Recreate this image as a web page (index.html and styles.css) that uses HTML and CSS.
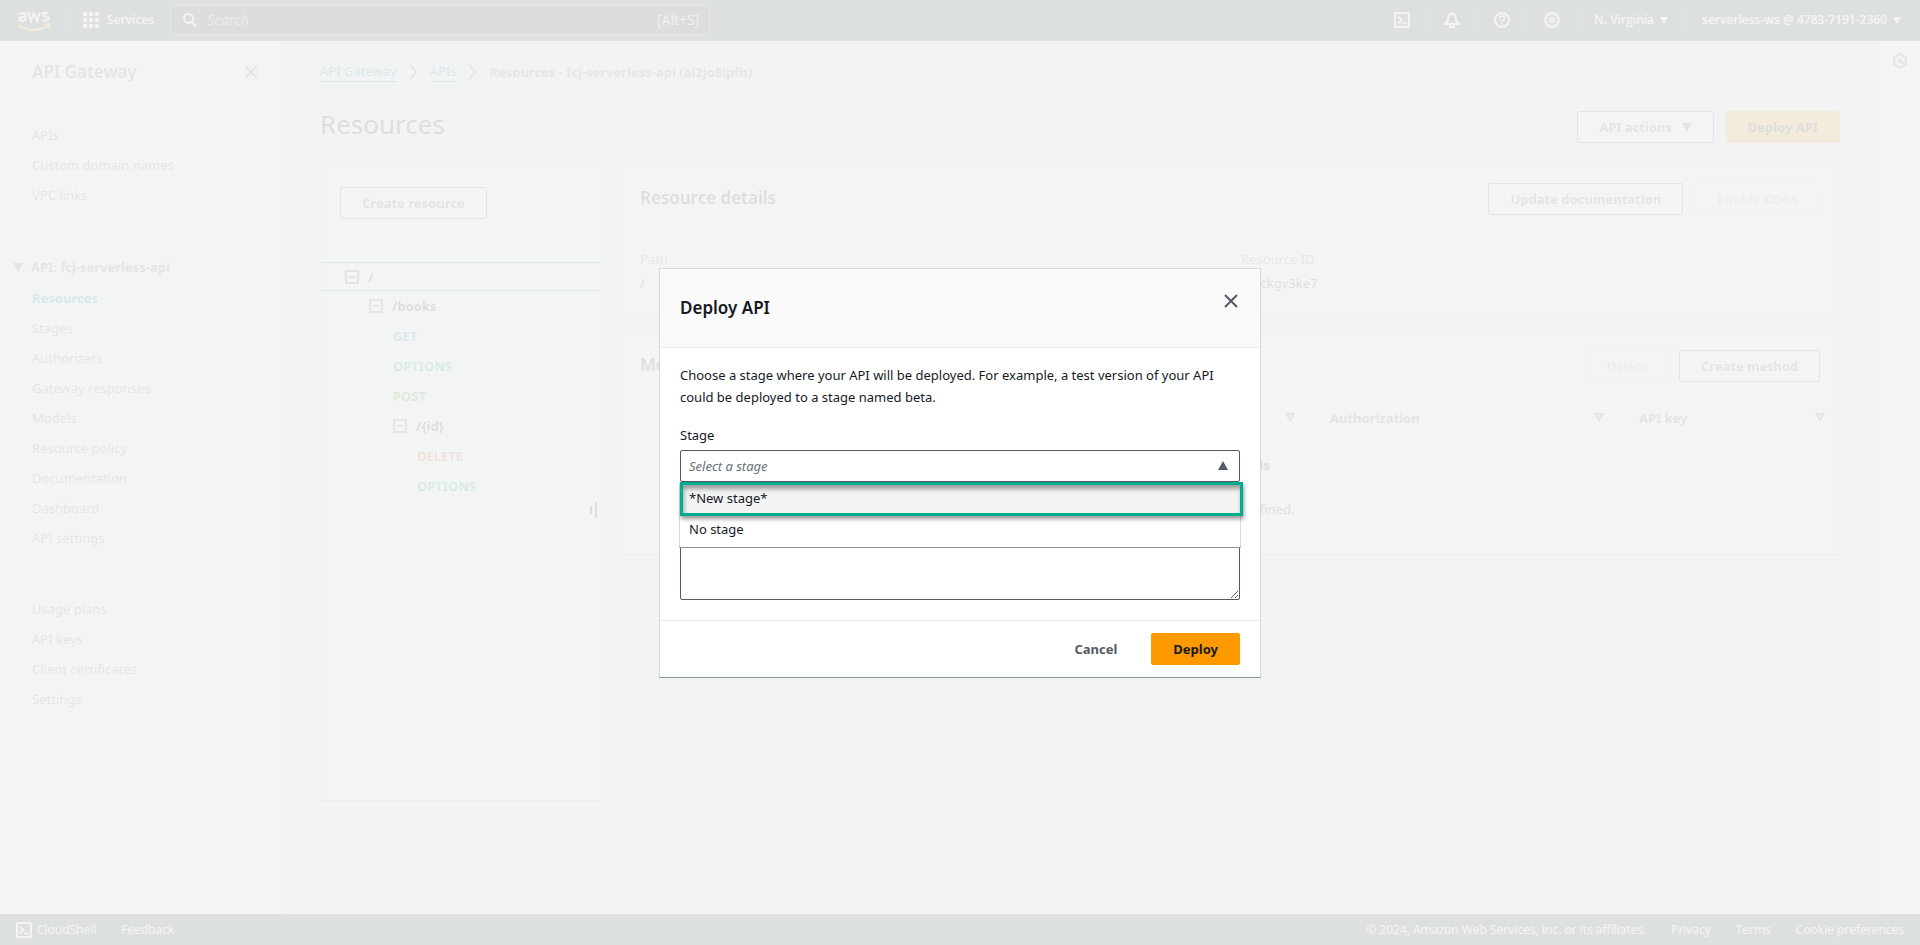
FILE: index.html
```html
<!DOCTYPE html>
<html lang="en">
<head>
<meta charset="utf-8">
<title>API Gateway - Resources</title>
<link rel="stylesheet" href="styles.css">
</head>
<body>
<div class="app">
  <header class="topbar">
    <a class="logo" href="#" aria-label="AWS">
      <svg width="34" height="24" viewBox="0 0 34 24" fill="none" stroke="#fff" stroke-width="2">
        <path d="M2.500 6.500Q7.500 3.500 8.500 7V13M8.500 9Q2.500 8.500 2.500 11Q3 14.500 8.500 11.500M11 4L14 13L17 5L20 13L23 4M31 5.500Q26 3.500 26 6.500C26 9.500 31.500 7.500 31.500 10.500Q31 14 25.500 12"/>
        <path d="M1 17Q16 26 30 18.500M27 16.500H32.500L31.500 21" stroke="#ff9900"/>
      </svg>
    </a>
    <button class="services" type="button">
      <svg width="16" height="16" viewBox="0 0 16 16" fill="#fff"><path d="M0 0h4v4H0zM6 0h4v4H6zM12 0h4v4h-4zM0 6h4v4H0zM6 6h4v4H6zM12 6h4v4h-4zM0 12h4v4H0zM6 12h4v4H6zM12 12h4v4h-4z"/></svg>
      Services
    </button>
    <label class="search">
      <svg width="14" height="14" viewBox="0 0 14 14" fill="none" stroke="#fff" stroke-width="2"><circle cx="5.500" cy="5.500" r="4.500"/><path d="M9 9l4.300 4.300"/></svg>
      <input type="search" placeholder="Search" aria-label="Search">
      <span>[Alt+S]</span>
    </label>
    <nav class="utilities">
      <button type="button" aria-label="CloudShell"><svg width="16" height="16" viewBox="0 0 16 16" fill="none" stroke="#fff" stroke-width="2"><rect x="1" y="1" width="14" height="14" rx="1"/><path d="M4 4.500L7.500 8L4 11.500M8.500 11.500H12.500"/></svg></button>
      <button type="button" aria-label="Notifications"><svg width="16" height="16" viewBox="0 0 16 16" fill="none" stroke="#fff" stroke-width="2" stroke-linejoin="round"><path d="M8 0v2M1 12H15L12 8.500V6Q11.500 2 8 2T4 6V8.500ZM6 13v2h4v-2"/></svg></button>
      <button type="button" aria-label="Help"><svg width="16" height="16" viewBox="0 0 16 16" fill="none" stroke="#fff" stroke-width="2"><circle cx="8" cy="8" r="7"/><path d="M5.500 6.500Q5.500 4 8 4T10.500 6.500C10.500 8 8 8 8 10M8 11v2" stroke-width="1.600"/></svg></button>
      <button type="button" aria-label="Settings"><svg width="16" height="16" viewBox="0 0 16 16" fill="none" stroke="#fff" stroke-width="2" stroke-linejoin="round"><path d="M6.500 1h3l.5 1.700 2-.7 2 2-.7 2 1.700.5v3l-1.700.5.700 2-2 2-2-.7-.5 1.700h-3L6 13.300l-2 .7-2-2 .7-2L1 9.500v-3L2.700 6 2 4l2-2 2 .7z"/><circle cx="8" cy="8" r="2"/></svg></button>
      <button type="button">N. Virginia <svg width="8" height="7" viewBox="0 0 8 7" fill="#fff"><path d="M0 0h8L4 7z"/></svg></button>
      <button type="button">serverless-ws @ 4783-7191-2360 <svg width="8" height="7" viewBox="0 0 8 7" fill="#fff"><path d="M0 0h8L4 7z"/></svg></button>
    </nav>
  </header>

  <div class="workspace">
    <aside class="sidebar">
      <div class="sidebar-head">
        <h2>API Gateway</h2>
        <button type="button" class="icon-button" aria-label="Close navigation"><svg width="14" height="14" viewBox="0 0 14 14" fill="none" stroke="#545b64" stroke-width="2"><path d="M1 1l12 12M13 1L1 13"/></svg></button>
      </div>
      <ul class="nav-list nav-first">
        <li><a href="#">APIs</a></li>
        <li><a href="#">Custom domain names</a></li>
        <li><a href="#">VPC links</a></li>
      </ul>
      <hr>
      <button type="button" class="nav-group"><svg width="10" height="9" viewBox="0 0 10 9" fill="#545b64"><path d="M0 0h10L5 9z"/></svg>API: fcj-serverless-api</button>
      <ul class="nav-list nav-api">
        <li><a class="current" href="#">Resources</a></li>
        <li><a href="#">Stages</a></li>
        <li><a href="#">Authorizers</a></li>
        <li><a href="#">Gateway responses</a></li>
        <li><a href="#">Models</a></li>
        <li><a href="#">Resource policy</a></li>
        <li><a href="#">Documentation</a></li>
        <li><a href="#">Dashboard</a></li>
        <li><a href="#">API settings</a></li>
      </ul>
      <hr>
      <ul class="nav-list nav-last">
        <li><a href="#">Usage plans</a></li>
        <li><a href="#">API keys</a></li>
        <li><a href="#">Client certificates</a></li>
        <li><a href="#">Settings</a></li>
      </ul>
    </aside>

    <main class="content">
      <nav class="crumbs" aria-label="Breadcrumb">
        <a href="#">API Gateway</a>
        <svg width="9" height="16" viewBox="0 0 9 16" fill="none" stroke="#687078" stroke-width="2"><path d="M1 1l6.500 7L1 15"/></svg>
        <a href="#">APIs</a>
        <svg width="9" height="16" viewBox="0 0 9 16" fill="none" stroke="#687078" stroke-width="2"><path d="M1 1l6.500 7L1 15"/></svg>
        <span>Resources - fcj-serverless-api (ai2jo8ipfh)</span>
      </nav>
      <div class="page-head">
        <h1>Resources</h1>
        <div class="actions">
          <button type="button" class="btn">API actions <svg width="10" height="9" viewBox="0 0 10 9" fill="#545b64"><path d="M0 0h10L5 9z"/></svg></button>
          <button type="button" class="btn primary">Deploy API</button>
        </div>
      </div>
      <div class="columns">
        <section class="panel tree-panel">
          <div class="tree-head"><button type="button" class="btn">Create resource</button></div>
          <ul class="tree">
            <li class="selected depth-0"><svg width="14" height="14" viewBox="0 0 14 14" fill="none" stroke="#545b64" stroke-width="2"><path d="M1 1h12v12H1zM4 7h6"/></svg>/</li>
            <li class="depth-1"><svg width="14" height="14" viewBox="0 0 14 14" fill="none" stroke="#545b64" stroke-width="2"><path d="M1 1h12v12H1zM4 7h6"/></svg>/books</li>
            <li class="depth-2 get">GET</li>
            <li class="depth-2 options">OPTIONS</li>
            <li class="depth-2 post">POST</li>
            <li class="depth-2"><svg width="14" height="14" viewBox="0 0 14 14" fill="none" stroke="#545b64" stroke-width="2"><path d="M1 1h12v12H1zM4 7h6"/></svg>/{id}</li>
            <li class="depth-3 delete">DELETE</li>
            <li class="depth-3 options">OPTIONS</li>
          </ul>
          <svg class="grip" width="8" height="16" viewBox="0 0 8 16" stroke="#16191f" stroke-width="2"><path d="M1 4v8M6 0v16"/></svg>
        </section>
        <div class="details">
          <section class="panel">
            <div class="panel-head">
              <h2>Resource details</h2>
              <div class="actions">
                <button type="button" class="btn">Update documentation</button>
                <button type="button" class="btn" disabled>Enable CORS</button>
              </div>
            </div>
            <dl class="facts">
              <div><dt>Path</dt><dd>/</dd></div>
              <div><dt>Resource ID</dt><dd>m1ckgv3ke7</dd></div>
            </dl>
          </section>
          <section class="panel">
            <div class="panel-head methods-head">
              <h2>Methods</h2>
              <div class="actions tight">
                <button type="button" class="btn" disabled>Delete</button>
                <button type="button" class="btn">Create method</button>
              </div>
            </div>
            <table class="methods">
              <colgroup><col><col class="col-mid"><col class="col-mid"><col class="col-key"></colgroup>
              <thead><tr>
                <th aria-label="Method type"></th>
                <th aria-label="Integration type"><div class="sort-only"><svg width="10" height="9" viewBox="0 0 10 9" fill="none" stroke="#545b64" stroke-width="2"><path d="M1.500 1h7L5 7z"/></svg></div></th>
                <th><div>Authorization <svg width="10" height="9" viewBox="0 0 10 9" fill="none" stroke="#545b64" stroke-width="2"><path d="M1.500 1h7L5 7z"/></svg></div></th>
                <th><div>API key <svg width="10" height="9" viewBox="0 0 10 9" fill="none" stroke="#545b64" stroke-width="2"><path d="M1.500 1h7L5 7z"/></svg></div></th>
              </tr></thead>
              <tbody><tr><td colspan="4"><strong>No methods</strong><p>No methods defined.</p></td></tr></tbody>
            </table>
          </section>
        </div>
      </div>
    </main>

    <aside class="tools">
      <button type="button" class="icon-button" aria-label="Info"><svg width="14" height="16" viewBox="0 0 14 16" fill="none" stroke="#545b64" stroke-width="2"><path d="M7 1l6 3.500v7L7 15l-6-3.500v-7z"/><circle cx="7" cy="8" r="2" fill="#545b64" stroke="none"/><path d="M7 8l4 3"/></svg></button>
    </aside>
  </div>

  <footer class="footer">
    <a class="shell" href="#"><svg width="16" height="16" viewBox="0 0 16 16" fill="none" stroke="#fff" stroke-width="2"><rect x="1" y="1" width="14" height="14" rx="1"/><path d="M4 4.500L7.500 8L4 11.500M8.500 11.500H12.500"/></svg>CloudShell</a>
    <a href="#">Feedback</a>
    <span class="copyright">© 2024, Amazon Web Services, Inc. or its affiliates.</span>
    <a href="#">Privacy</a>
    <a href="#">Terms</a>
    <a href="#">Cookie preferences</a>
  </footer>
</div>

<div class="overlay">
  <form class="modal" role="dialog" aria-modal="true" aria-labelledby="modal-title">
    <div class="modal-head">
      <h2 id="modal-title">Deploy API</h2>
      <button type="button" class="icon-button" aria-label="Close"><svg width="14" height="14" viewBox="0 0 14 14" fill="none" stroke="#545b64" stroke-width="2"><path d="M1 1l12 12M13 1L1 13"/></svg></button>
    </div>
    <div class="modal-body">
      <p>Choose a stage where your API will be deployed. For example, a test version of your API could be deployed to a stage named beta.</p>
      <label for="stage">Stage</label>
      <div class="picker">
        <select id="stage"><option>Select a stage</option></select>
        <svg class="caret" width="10" height="9" viewBox="0 0 10 9" fill="#545b64"><path d="M0 9h10L5 0z"/></svg>
        <ul class="menu" role="listbox">
          <li class="active" role="option">*New stage*</li>
          <li role="option">No stage</li>
        </ul>
      </div>
      <textarea aria-label="Deployment description"></textarea>
    </div>
    <div class="modal-foot">
      <button type="button" class="btn link">Cancel</button>
      <button type="submit" class="btn primary">Deploy</button>
    </div>
  </form>
</div>
</body>
</html>
```
FILE: styles.css
```css
* { box-sizing: border-box; }
body {
  margin: 0;
  font: 13px/22px "Noto Sans", "Open Sans", sans-serif;
  color: #16191f;
  background: #f2f3f3;
}
h1, h2, p, ul, dl, dd { margin: 0; padding: 0; }
ul { list-style: none; }
a { color: inherit; text-decoration: none; }
button, input, select, textarea { font: inherit; color: inherit; }
button { background: none; border: 0; padding: 0; }
svg { display: block; flex: none; }
h2 { font-size: 17px; line-height: 22px; font-weight: 600; }

.app { display: flex; flex-direction: column; min-height: 100vh; }

.topbar {
  display: flex;
  align-items: center;
  height: 41px;
  padding: 0 19px 0 17px;
  background: #232f3e;
  border-bottom: 1px solid #414d5c;
  color: #fff;
  font-family: "Open Sans", "Noto Sans", sans-serif;
  font-size: 12px;
}
.logo { padding-right: 15px; border-right: 1px solid #414d5c; }
.services { display: flex; align-items: center; gap: 8px; padding: 0 16px; font-weight: 600; }
.search {
  display: flex;
  align-items: center;
  gap: 10px;
  width: 540px;
  height: 30px;
  padding: 0 10px 0 12px;
  background: #16191f;
  border: 1px solid #687078;
  border-radius: 2px;
  font-size: 14px;
}
.search input { flex: 1; min-width: 0; padding: 0; border: 0; background: none; outline: 0; }
.search input::placeholder { font-style: italic; color: #95a5a6; opacity: 1; }
.search span { color: #d5dbdb; }
.utilities { display: flex; align-items: center; margin-left: auto; font-weight: 600; }
.utilities button { display: flex; align-items: center; gap: 6px; height: 24px; padding: 0 17px 0 16px; border-right: 1px solid #414d5c; }
.utilities button:last-child { padding-right: 0; border: 0; }

.workspace { display: flex; flex: 1; }
.sidebar { width: 281px; background: #fff; border-right: 1px solid #d5dbdb; color: #545b64; }
.sidebar-head { display: flex; align-items: center; justify-content: space-between; height: 63px; padding: 0 22px 0 32px; border-bottom: 1px solid #eaeded; }
.icon-button { display: flex; }
.sidebar hr { margin: 0 20px 0 22px; border: 0; border-top: 1px solid #eaeded; }
.nav-list { padding-left: 32px; }
.nav-list li { line-height: 22px; margin-bottom: 8px; }
.nav-first { padding-top: 20px; padding-bottom: 16px; }
.nav-group { display: flex; align-items: center; gap: 8px; padding: 25px 0 0 13px; font-weight: 700; }
.nav-api { padding-top: 9px; padding-bottom: 16px; }
.nav-last { padding-top: 24px; }
.current { color: #0073bb; font-weight: 700; }

.content { flex: 1; min-width: 0; padding: 20px 38px 0 39px; }
.crumbs { display: flex; align-items: center; gap: 12px; color: #687078; font-weight: 700; }
.crumbs a { color: #0073bb; font-weight: 400; line-height: 19px; border-bottom: 1px solid #0073bb; }
.page-head { display: flex; align-items: flex-start; justify-content: space-between; margin-top: 23px; height: 42px; }
.page-head h1 { font-size: 26px; line-height: 36px; font-weight: 400; }
.page-head .actions { margin-top: 5px; }
.actions { display: flex; gap: 12px; }
.tight { gap: 8px; }
.btn {
  display: flex;
  align-items: center;
  gap: 10px;
  height: 32px;
  padding: 0 21px;
  border: 1px solid #545b64;
  border-radius: 2px;
  background: #fff;
  color: #545b64;
  font-weight: 700;
}
.btn:disabled { border-color: #d5dbdb; color: #aab7b8; }
.btn.primary { background: #ff9900; border-color: #ff9900; color: #16191f; }
.btn.link { border-color: transparent; background: none; }

.columns { display: flex; align-items: flex-start; gap: 19px; margin-top: 19px; }
.panel { background: #fff; border: 1px solid #d5dbdb; border-top-color: #eaeded; border-bottom-color: #aab7b8; }
.tree-panel { position: relative; width: 281px; height: 634px; }
.tree-head { display: flex; height: 74px; padding: 19px; background: #fafafa; border-bottom: 1px solid #eaeded; }
.tree { padding-top: 20px; font-weight: 700; }
.tree li { display: flex; align-items: center; gap: 9px; height: 30px; }
.tree .selected { height: 29px; background: #f1faff; border: 1px solid #0073bb; border-width: 1px 0; }
.depth-0 { padding-left: 24px; }
.depth-1 { padding-left: 48px; }
.depth-2 { padding-left: 72px; }
.depth-3 { padding-left: 96px; }
.get { color: #0073bb; }
.options { color: #008c80; }
.post { color: #1d8102; }
.delete { color: #d13212; }
.grip { position: absolute; right: 2px; top: 334px; }

.details { display: flex; flex: 1; flex-direction: column; gap: 20px; min-width: 0; }
.panel-head { display: flex; align-items: flex-start; justify-content: space-between; height: 63px; padding: 15px 19px 0; background: #fafafa; border-bottom: 1px solid #eaeded; }
.panel-head h2 { margin-top: 4px; }
.facts { display: grid; grid-template-columns: 1fr 1fr; padding: 17px 19px 19px; }
.facts div + div { padding-left: 10px; border-left: 1px solid #eaeded; }
.facts dt { color: #687078; }
.facts dd { margin-top: 2px; }
.methods { width: 100%; table-layout: fixed; border-collapse: collapse; }
.methods-head { height: 62px; border-bottom: 0; }
.col-mid { width: 309px; }
.col-key { width: 210px; }
.methods th { height: 40px; padding: 0 25px 0 10px; text-align: left; font-weight: 700; color: #545b64; background: #fafafa; border: 1px solid #eaeded; border-width: 1px 0; }
.methods th:last-child { padding-right: 14px; }
.methods th div { display: flex; align-items: center; justify-content: space-between; }
.methods .sort-only { justify-content: flex-end; }
.methods td { padding: 16px 0 34px; text-align: center; }
.methods td strong { font-weight: 700; }
.methods td p { margin-top: 22px; }

.tools { width: 42px; background: #fff; border-left: 1px solid #d5dbdb; padding: 12px 14px; }

.footer { display: flex; align-items: center; height: 31px; padding: 0 16px; gap: 25px; background: #232f3e; color: #fff; font-family: "Open Sans", "Noto Sans", sans-serif; font-size: 12px; }
.shell { display: flex; align-items: center; gap: 5px; }
.copyright { margin-left: auto; }

.overlay { position: fixed; inset: 0; display: flex; align-items: center; justify-content: center; background: rgba(242, 244, 243, .9); }
.modal { width: 602px; background: #fff; border: 1px solid #d5dbdb; border-bottom-color: #879596; }
.modal-head { display: flex; align-items: flex-start; justify-content: space-between; padding: 28px 22px 28px 20px; background: #fafafa; border-bottom: 1px solid #eaeded; }
.modal-head .icon-button { margin-top: -3px; }
.modal-body { padding: 16px 20px 20px; }
.modal-body p { margin-bottom: 16px; }
.modal-body label { display: block; margin-bottom: 4px; }
.picker { position: relative; margin-bottom: 42px; }
.picker select { display: block; width: 100%; height: 32px; padding: 0 8px; appearance: none; background: #fff; border: 1px solid #545b64; border-radius: 2px; font-style: italic; color: #687078; }
.caret { position: absolute; right: 12px; top: 11px; pointer-events: none; }
.menu { position: absolute; top: 32px; left: -1px; right: -1px; background: #fff; border: 1px solid #d5dbdb; border-top: 0; border-bottom-color: #879596; }
.menu li { padding: 2px 9px 7px; line-height: 22px; }
.menu .active { margin: 0 -3px 0 0; padding: 2px 6px 4px; border: 3px solid #00ad8f; background: #f2f3f3; box-shadow: 1px 3px 4px rgba(0, 0, 0, .4), inset 1px 4px 4px rgba(0, 0, 0, .35); }
.modal-body textarea { display: block; width: 100%; height: 76px; border: 1px solid #545b64; border-radius: 2px; background: #fff; }
.modal-foot { display: flex; justify-content: flex-end; gap: 12px; padding: 12px 20px; border-top: 1px solid #eaeded; }
```
